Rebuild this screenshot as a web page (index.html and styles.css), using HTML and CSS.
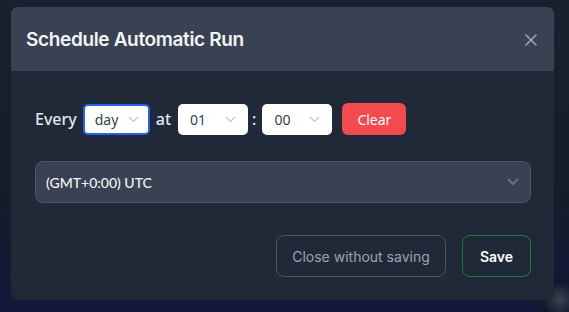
FILE: index.html
```html
<!DOCTYPE html>
<html>
<head>
<meta charset="utf-8">
<link rel="stylesheet" href="styles.css">
</head>
<body>
<div class="backdrop">
  <div class="modal">
    <div class="modal-header">
      <h2 class="title">Schedule Automatic Run</h2>
      <span class="close">
        <svg width="14" height="14" viewBox="0 0 14 14"><path d="M2 2L12 12M12 2L2 12" stroke="#9ca3af" stroke-width="1.6" stroke-linecap="round"/></svg>
      </span>
    </div>
    <div class="modal-body">
      <div class="row">
        <span class="label">Every</span>
        <div class="select sel-day focused"><span>day</span><svg class="chev" width="11" height="7" viewBox="0 0 11 7"><path d="M1 1l4.5 4.5L10 1" fill="none" stroke="#c0c4cc" stroke-width="1.1"/></svg></div>
        <span class="label at">at</span>
        <div class="select sel-time"><span>01</span><svg class="chev" width="11" height="7" viewBox="0 0 11 7"><path d="M1 1l4.5 4.5L10 1" fill="none" stroke="#c0c4cc" stroke-width="1.1"/></svg></div>
        <span class="label colon">:</span>
        <div class="select sel-time"><span>00</span><svg class="chev" width="11" height="7" viewBox="0 0 11 7"><path d="M1 1l4.5 4.5L10 1" fill="none" stroke="#c0c4cc" stroke-width="1.1"/></svg></div>
        <button class="btn-clear">Clear</button>
      </div>
      <div class="tz">
        <span>(GMT+0:00) UTC</span>
        <svg width="12" height="8" viewBox="0 0 12 8"><path d="M1.5 1.5L6 6l4.5-4.5" fill="none" stroke="#6b7280" stroke-width="2" stroke-linecap="round" stroke-linejoin="round"/></svg>
      </div>
      <div class="actions">
        <button class="btn-outline">Close without saving</button>
        <button class="btn-save">Save</button>
      </div>
    </div>
  </div>
</div>
</body>
</html>
```
FILE: styles.css
```css
html, body {
  margin: 0;
  padding: 0;
  width: 569px;
  height: 312px;
  overflow: hidden;
}
body {
  background: radial-gradient(circle at 560px 300px, #3a4150 0, #12172a 18px, transparent 30px),
              linear-gradient(180deg, #1b2030 0%, #171c2a 60%, #12183a 100%);
  font-family: "Noto Sans", "Open Sans", sans-serif;
}
.backdrop {
  padding: 7px 15px 12px 11px;
}
.modal {
  width: 543px;
  height: 293px;
  border-radius: 7px;
  overflow: hidden;
  background: #202938;
  display: flex;
  flex-direction: column;
}
.modal-header {
  height: 64px;
  background: #394252;
  display: flex;
  align-items: center;
  justify-content: space-between;
  padding: 0 16px 0 15px;
  box-sizing: border-box;
}
.title {
  margin: 0;
  font-family: Inter, sans-serif;
  font-weight: 600;
  font-size: 19px;
  letter-spacing: -0.35px;
  color: #f3f4f6;
}
.close {
  display: flex;
  margin-top: 2px;
}
.modal-body {
  padding: 32px 23px 23px 24px;
  display: flex;
  flex-direction: column;
}
.row {
  display: flex;
  align-items: center;
  height: 32px;
}
.label {
  color: #e5e7eb;
  font-size: 16px;
  font-weight: 500;
  margin-right: 6px;
}
.label.at {
  margin-left: 1px;
  margin-right: 7px;
}
.label.colon {
  margin: 0 6px 0 4px;
}
.select {
  box-sizing: border-box;
  height: 31px;
  background: #fff;
  border-radius: 5px;
  display: flex;
  align-items: center;
  justify-content: space-between;
  font-size: 14px;
  color: #374151;
  padding: 0 10px 0 11px;
}
.sel-day {
  width: 67px;
  border: 2px solid #2563eb;
  padding-left: 10px;
  padding-right: 9px;
  margin-right: 5px;
}
.sel-time {
  width: 70px;
  padding-left: 12px;
  padding-right: 12px;
}
.chev { margin-top: 1px; }
.btn-clear {
  margin-left: 10px;
  width: 64px;
  height: 32px;
  border: none;
  border-radius: 6px;
  background: #f24a4f;
  color: #fff;
  font-family: "Noto Sans", sans-serif;
  font-size: 14px;
}
.tz {
  margin-top: 26px;
  height: 42px;
  box-sizing: border-box;
  border: 1px solid #4b5563;
  border-radius: 8px;
  background: #384252;
  display: flex;
  align-items: center;
  justify-content: space-between;
  padding: 0 11px 0 10px;
  color: #f3f4f6;
  font-family: "Lato", sans-serif;
  font-size: 14px;
  font-weight: 500;
}
.actions {
  margin-top: 32px;
  display: flex;
  justify-content: flex-end;
  gap: 16px;
}
.actions button {
  height: 42px;
  border-radius: 8px;
  background: transparent;
  font-family: Inter, sans-serif;
  font-size: 14px;
}
.btn-outline {
  width: 170px;
  border: 1px solid #4b5563;
  color: #9ca3af;
}
.btn-save {
  width: 69px;
  border: 1px solid #15803d;
  color: #fff;
  font-weight: 600;
}
```
